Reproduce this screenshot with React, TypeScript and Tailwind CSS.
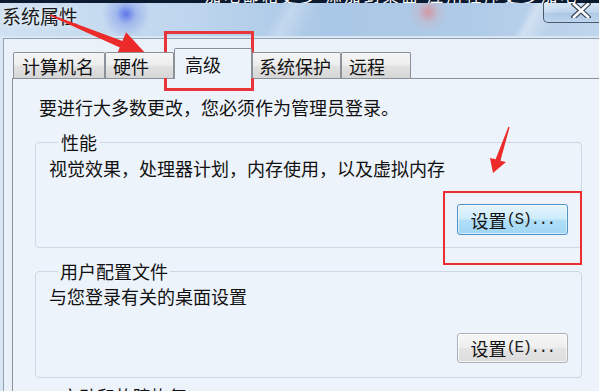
const tabs = [
  { label: "计算机名", w: "w-[92px]", pl: "pl-[8px]" },
  { label: "硬件", w: "w-[69px]", pl: "pl-[7px]" },
  { label: "高级", w: "w-[78px]", pl: "pl-[10px]", active: true },
  { label: "系统保护", w: "w-[89px]", pl: "pl-[6px]" },
  { label: "远程", w: "w-[70px]", pl: "pl-[7px]" },
];

function WinButton({ hot, letter, h }: { hot?: boolean; letter: string; h: string }) {
  return (
    <div
      className={
        "w-[111px] " +
        h +
        " rounded-[3px] border flex items-center justify-center " +
        (hot
          ? "border-[#4d93c9] bg-[linear-gradient(180deg,#e6f5fd_0%,#cdebfb_48%,#b2dff8_52%,#a0d6f4_100%)] shadow-[inset_0_0_0_1px_rgba(255,255,255,0.55)]"
          : "border-[#adb2b8] bg-[linear-gradient(180deg,#f6f6f6_0%,#eeeeee_48%,#e4e4e4_52%,#dcdcdc_100%)] shadow-[inset_0_0_0_1px_rgba(255,255,255,0.7)]")
      }
    >
      <span className="text-[18px] leading-[20px] text-[#111]">设置</span>
      <span className="font-['Liberation_Mono',monospace] text-[16px] leading-[20px] tracking-[-1.6px] text-[#222]">
        ({letter})...
      </span>
    </div>
  );
}

export default function App() {
  return (
    <div className="relative w-[599px] h-[391px] overflow-hidden bg-[#d9e6f3] font-['Noto_Sans_CJK_SC','Noto_Sans',sans-serif] text-[#111]">
      {/* title bar */}
      <div className="h-[36px] flex flex-col bg-[radial-gradient(circle_at_126px_14px,rgba(70,95,235,0.8)_0px,rgba(110,135,235,0.4)_10px,transparent_24px),radial-gradient(circle_at_428px_12px,rgba(235,120,120,0.6)_0px,rgba(235,150,150,0.2)_10px,transparent_20px),linear-gradient(118deg,transparent_0px,transparent_470px,rgba(255,255,255,0.35)_478px,transparent_500px),linear-gradient(118deg,transparent_0px,transparent_250px,rgba(255,255,255,0.25)_262px,transparent_285px),linear-gradient(90deg,#cfe1f2_0%,#bfd6ee_30%,#a9c7e6_55%,#b0cbe8_80%,#c0d6ec_100%)]">
        <div className="h-[3px] shrink-0 bg-[#0c1a30] flex overflow-hidden">
          <div className="ml-[205px] -mt-[13px] text-white text-[16px] leading-[16px] whitespace-nowrap tracking-[3px]">
            加吧邮箱更多 添加到桌面 应用程序更多加吧
          </div>
        </div>
        <div className="flex flex-1 items-start">
          <div className="pl-[2px] pt-[2px] text-[19px] leading-[22px] text-[#1a1a1a] [text-shadow:0_0_6px_rgba(255,255,255,0.95)]">
            系统属性
          </div>
          <div className="ml-auto -mr-[20px] shrink-0 w-[76px] h-[20px] border border-t-0 border-[#4a5b70] rounded-bl-[5px] bg-[linear-gradient(180deg,rgba(255,255,255,0.35)_0%,rgba(200,222,244,0.3)_45%,rgba(140,175,215,0.3)_55%,rgba(190,215,240,0.45)_100%)] flex justify-center items-start">
            <svg width="20" height="15" viewBox="0 0 20 15">
              <path d="M3 1 L17 14 M17 1 L3 14" stroke="#3d4a5c" strokeWidth="5" strokeLinecap="square" />
              <path d="M3 1 L17 14 M17 1 L3 14" stroke="#ffffff" strokeWidth="2.6" strokeLinecap="square" />
            </svg>
          </div>
        </div>
      </div>

      {/* frame */}
      <div className="pt-[2px] pl-[3px] h-[355px]">
        <div className="h-full border-t border-l border-[#95a2b1] bg-[#ebf1f9] pt-[9px] pl-[8px]">
          {/* tabs */}
          <div className="flex items-end ml-[1px] h-[30px] relative z-10">
            {tabs.map((t) =>
              t.active ? (
                <div
                  key={t.label}
                  className={t.w + " " + t.pl + " h-[31px] -mb-px shrink-0 border border-b-0 border-[#8a9199] rounded-t-[2px] bg-[#edf3fa] flex items-center text-[18px] leading-[20px]"}
                >
                  {t.label}
                </div>
              ) : (
                <div
                  key={t.label}
                  className={t.w + " " + t.pl + " h-[26px] shrink-0 border border-b-0 border-[#8a9199] rounded-t-[2px] bg-[linear-gradient(180deg,#f5f5f5_0%,#ededed_48%,#e2e2e2_52%,#d6d6d6_100%)] flex items-center text-[18px] leading-[20px]"}
                >
                  {t.label}
                </div>
              )
            )}
          </div>
          {/* panel */}
          <div className="h-[400px] border-t border-l border-[#8a9199] bg-[#edf3fa] pl-[22px] pt-[18px]">
            <div className="pl-[4px] text-[18px] leading-[20px]">要进行大多数更改，您必须作为管理员登录。</div>

            <fieldset className="mt-[15px] w-[547px] border border-[#cdd7e1] rounded-[4px] pl-[13px] pr-[13px] pb-[12px]">
              <legend className="ml-[9px] px-[3px] text-[18px] leading-[20px]">性能</legend>
              <div className="mt-[6px] text-[18px] leading-[20px]">视觉效果，处理器计划，内存使用，以及虚拟内存</div>
              <div className="mt-[26px] flex justify-end">
                <WinButton hot letter="S" h="h-[31px]" />
              </div>
            </fieldset>

            <fieldset className="mt-[13px] w-[547px] border border-[#cdd7e1] rounded-[4px] pl-[13px] pr-[13px] pb-[14px]">
              <legend className="ml-[9px] px-[2px] text-[18px] leading-[20px]">用户配置文件</legend>
              <div className="mt-[5px] text-[18px] leading-[20px]">与您登录有关的桌面设置</div>
              <div className="mt-[27px] flex justify-end">
                <WinButton letter="E" h="h-[30px]" />
              </div>
            </fieldset>

            <fieldset className="mt-[8px] w-[547px] border border-[#cdd7e1] rounded-[4px] pl-[13px] pr-[13px] pb-[14px] h-[100px]">
              <legend className="ml-[9px] px-[3px] text-[18px] leading-[20px]">启动和故障恢复</legend>
            </fieldset>
          </div>
        </div>
      </div>

      {/* red annotation boxes */}
      <div className="absolute left-[164px] top-[31px] w-[90px] h-[60px] border-[3px] border-[#e8353a] pointer-events-none" />
      <div className="absolute left-[443px] top-[191px] w-[139px] h-[74px] border-2 border-[#ea2d31] pointer-events-none" />

      {/* red arrows */}
      <svg className="absolute left-0 top-0 pointer-events-none" width="599" height="391" viewBox="0 0 599 391">
        <polygon
          points="50.2,14.3 122.4,41.1 126.1,32.3 147,55 116.1,56.3 119.8,47.5 49.8,15.7"
          fill="#ec2a2a"
        />
        <polygon
          points="508.4,126.8 509.6,127.2 500.4,160.8 506,162 493,173 490,158 495.6,159.2"
          fill="#ec2a2a"
        />
      </svg>
    </div>
  );
}
